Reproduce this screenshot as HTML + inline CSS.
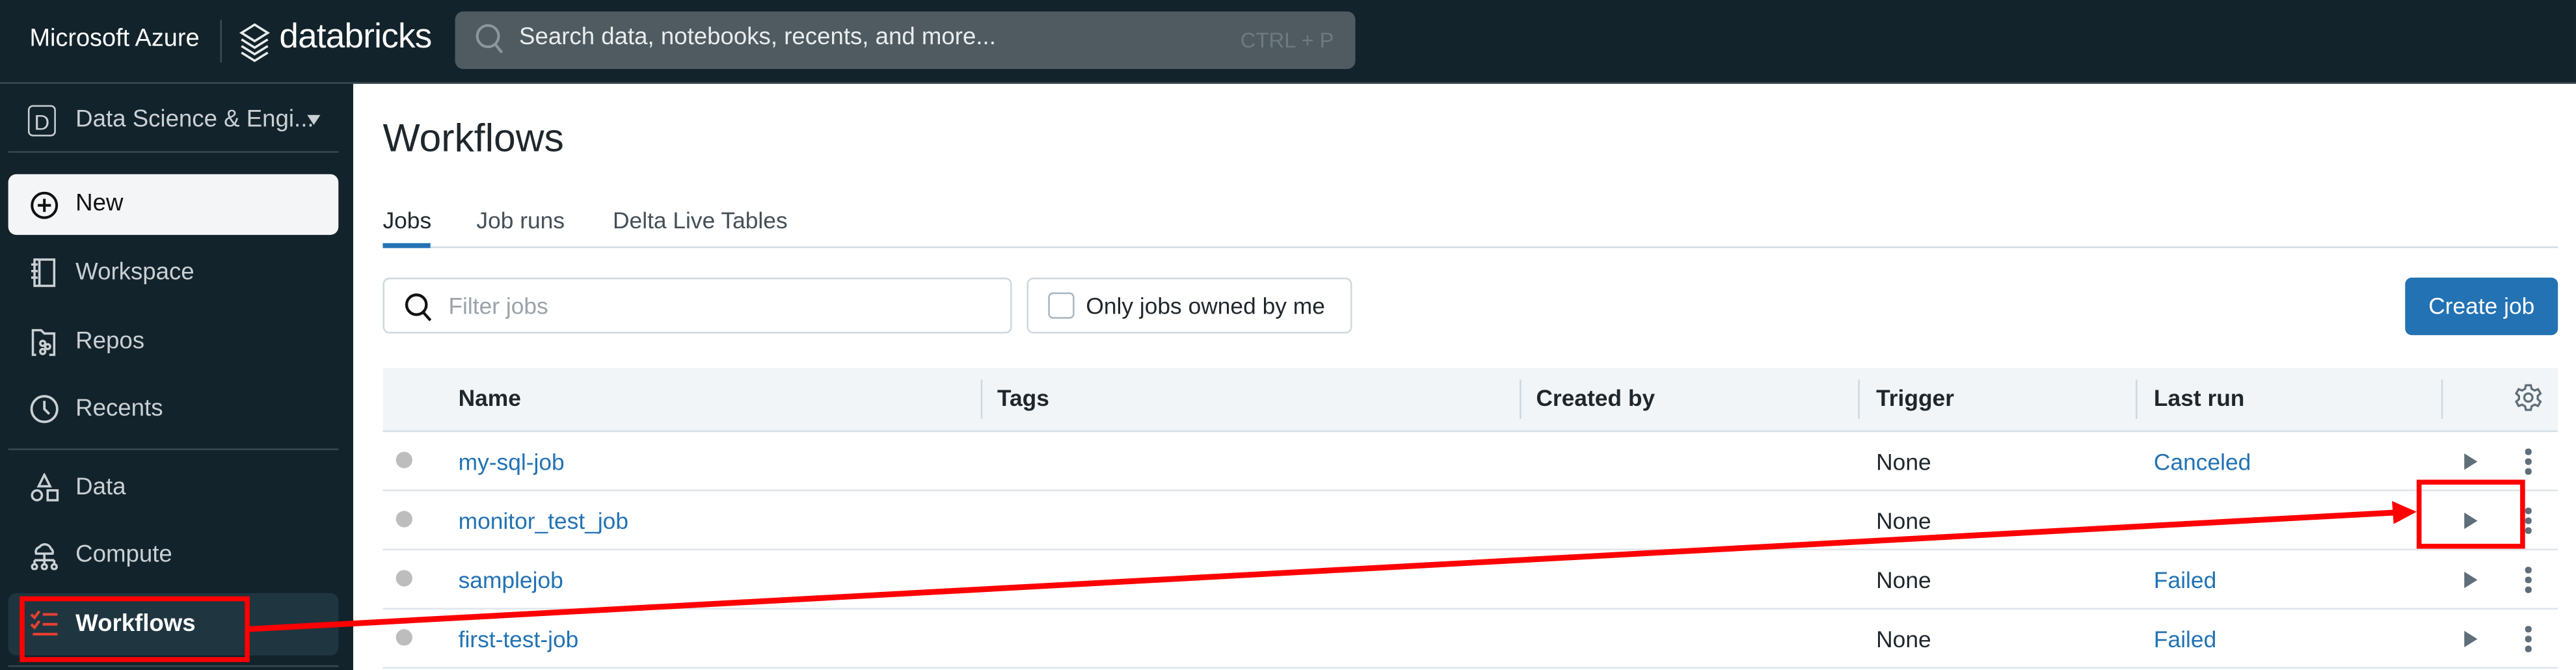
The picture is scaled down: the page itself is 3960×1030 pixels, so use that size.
<!DOCTYPE html>
<html><head><meta charset="utf-8">
<style>
html,body{margin:0;padding:0;width:3960px;height:1030px;overflow:hidden;background:#fff}
#w{position:absolute;left:0;top:0;width:1568px;height:408px;transform:scale(2.5255);transform-origin:0 0;font-family:"Liberation Sans",sans-serif;font-size:14px;color:#1f272d}
.a{position:absolute}
.top{left:0;top:0;width:1568px;height:50px;background:#13232b;border-bottom:1px solid #3a4850}
.side{left:0;top:51px;width:215px;height:357px;background:#13232b}
.si{position:absolute;left:18px;color:#c9d0d4;font-size:14.5px}
.ic{position:absolute;left:18px;width:18px;height:18px}
.hr{position:absolute;left:5px;width:201px;height:1px;background:#3a4850}
.th{font-weight:bold;font-size:14px;color:#1f272d}
.sep{position:absolute;top:231px;width:1px;height:24px;background:#cfd8e0}
.rl{position:absolute;left:233px;width:1324px;height:1px;background:#dfe5ea}
.lnk{color:#2272b4}
.dot{position:absolute;left:241px;width:10px;height:10px;border-radius:50%;background:#bdbdbd}
.play{position:absolute;left:1500px;width:0;height:0;border-left:8px solid #5f6e78;border-top:5px solid transparent;border-bottom:5px solid transparent}
.kb{position:absolute;left:1537px;width:3px}
.kb i{display:block;width:3.5px;height:3.5px;border-radius:50%;background:#5f6e78;margin-bottom:2.5px}
</style></head><body><div id="w">
<div class="a top"></div>
<div class="a" style="left:18px;top:15px;color:#fff;font-size:15px">Microsoft Azure</div>
<div class="a" style="left:134px;top:12px;width:1px;height:26px;background:#3e4b52"></div>
<svg class="a" style="left:144px;top:14px" width="22" height="24" viewBox="0 0 22 24"><g fill="none" stroke="#e8eced" stroke-width="1.4"><path d="M11 1L19 6 11 11 3 6Z"/><path d="M3 10l8 5 8-5"/><path d="M3 14l8 5 8-5"/><path d="M3 18l8 5 8-5"/></g></svg>
<div class="a" style="left:170px;top:11px;color:#fff;font-size:21px;letter-spacing:-0.3px">databricks</div>
<div class="a" style="left:277px;top:7px;width:548px;height:35px;background:#4f5b61;border-radius:5px"></div>
<svg class="a" style="left:289px;top:14px" width="18" height="20" viewBox="0 0 18 20"><circle cx="8" cy="8" r="6.5" fill="none" stroke="#8b979d" stroke-width="1.6"/><path d="M12.5 13l4 5" stroke="#8b979d" stroke-width="1.6"/></svg>
<div class="a" style="left:316px;top:15px;color:#e9edef;font-size:14.5px">Search data, notebooks, recents, and more...</div>
<div class="a" style="left:755px;top:17px;color:#6d7a81;font-size:13px">CTRL + P</div>

<div class="a side"></div>
<div class="a" style="left:17px;top:64px;width:17px;height:19px;border:1.5px solid #c9d0d4;border-radius:3px;color:#c9d0d4;font-size:13px;text-align:center;line-height:19px;box-sizing:border-box">D</div>
<div class="si" style="left:46px;top:65px">Data Science &amp; Engi...</div>
<div class="a" style="left:187px;top:70px;border-top:6px solid #c9d0d4;border-left:4px solid transparent;border-right:4px solid transparent"></div>
<div class="hr" style="top:92px"></div>
<div class="a" style="left:5px;top:106px;width:201px;height:37px;background:#f4f5f7;border-radius:5px"></div>
<svg class="a" style="left:18px;top:116px" width="18" height="18" viewBox="0 0 18 18"><circle cx="9" cy="9" r="7.5" fill="none" stroke="#111" stroke-width="1.6"/><path d="M9 5v8M5 9h8" stroke="#111" stroke-width="1.6"/></svg>
<div class="a" style="left:46px;top:116px;font-size:14.5px;color:#111">New</div>
<svg class="ic" style="top:157px" viewBox="0 0 18 18"><g fill="none" stroke="#c9d0d4" stroke-width="1.4"><rect x="3" y="1" width="12" height="16"/><path d="M6 1v16M1 4h4M1 8h4M1 12h4"/></g></svg>
<div class="si" style="left:46px;top:158px">Workspace</div>
<svg class="ic" style="top:199px" viewBox="0 0 18 18"><g fill="none" stroke="#c9d0d4" stroke-width="1.4"><path d="M4 17H2V2h5l2 2h6v13h-3"/><circle cx="8" cy="10" r="1.5"/><circle cx="11" cy="12" r="1.5"/><circle cx="8" cy="15" r="1.5"/></g></svg>
<div class="si" style="left:46px;top:200px">Repos</div>
<svg class="ic" style="top:240px" viewBox="0 0 18 18"><g fill="none" stroke="#c9d0d4" stroke-width="1.5"><circle cx="9" cy="9" r="7.8"/><path d="M9 4v5l3 3"/></g></svg>
<div class="si" style="left:46px;top:241px">Recents</div>
<div class="hr" style="top:273px"></div>
<svg class="ic" style="top:288px" viewBox="0 0 18 18"><g fill="none" stroke="#c9d0d4" stroke-width="1.4"><path d="M9 1l3.5 7h-7z"/><circle cx="4.5" cy="13.5" r="3"/><rect x="11" y="10.5" width="6" height="6"/></g></svg>
<div class="si" style="left:46px;top:289px">Data</div>
<svg class="ic" style="top:329px" viewBox="0 0 18 18"><g fill="none" stroke="#c9d0d4" stroke-width="1.4"><path d="M4 8a3 3 0 0 1 2-4 4 4 0 0 1 7 1 2.5 2.5 0 0 1 1 3z"/><path d="M9 8v4M3 12h12M3 12v2M9 12v2M15 12v2"/><circle cx="3" cy="16" r="1.5"/><circle cx="9" cy="16" r="1.5"/><circle cx="15" cy="16" r="1.5"/></g></svg>
<div class="si" style="left:46px;top:330px">Compute</div>
<div class="a" style="left:5px;top:361px;width:201px;height:38px;background:#1f3540;border-radius:5px"></div>
<svg class="ic" style="top:371px" viewBox="0 0 18 18"><g fill="none" stroke="#e8402f" stroke-width="1.6"><path d="M1 3l2 2 3-4M1 9l2 2 3-4"/><path d="M8 3h9M8 9h9M2 15h15"/></g></svg>
<div class="si" style="left:46px;top:372px;color:#fff;font-weight:bold">Workflows</div>
<div class="hr" style="top:405px"></div>

<div class="a" style="left:233px;top:71px;font-size:24px;color:#1f272d">Workflows</div>
<div class="a" style="left:233px;top:126px;font-size:14px;color:#1f272d">Jobs</div>
<div class="a" style="left:290px;top:126px;font-size:14px;color:#444f57">Job runs</div>
<div class="a" style="left:373px;top:126px;font-size:14px;color:#444f57">Delta Live Tables</div>
<div class="a" style="left:233px;top:150px;width:1324px;height:1px;background:#d0dbe4"></div>
<div class="a" style="left:233px;top:148px;width:29px;height:3px;background:#2272b4"></div>

<div class="a" style="left:233px;top:169px;width:383px;height:34px;border:1px solid #cfd8e0;border-radius:4px;box-sizing:border-box"></div>
<svg class="a" style="left:246px;top:178px" width="18" height="18" viewBox="0 0 18 18"><circle cx="7.5" cy="7.5" r="6" fill="none" stroke="#111" stroke-width="1.7"/><path d="M11.5 12l4.5 5" stroke="#111" stroke-width="1.7"/></svg>
<div class="a" style="left:273px;top:178px;color:#9aa3aa;font-size:14px">Filter jobs</div>
<div class="a" style="left:625px;top:169px;width:198px;height:34px;border:1px solid #cfd8e0;border-radius:4px;box-sizing:border-box"></div>
<div class="a" style="left:638px;top:178px;width:16px;height:16px;border:1px solid #aab6c0;border-radius:3px;box-sizing:border-box"></div>
<div class="a" style="left:661px;top:178px;font-size:14px">Only jobs owned by me</div>
<div class="a" style="left:1464px;top:169px;width:93px;height:35px;background:#2272b4;border-radius:4px;color:#fff;font-size:14px;text-align:center;line-height:35px">Create job</div>

<div class="a" style="left:233px;top:224px;width:1324px;height:38px;background:#f2f5f7;border-bottom:1px solid #d5dee6"></div>
<div class="a th" style="left:279px;top:234px">Name</div>
<div class="sep" style="left:597px"></div><div class="a th" style="left:607px;top:234px">Tags</div>
<div class="sep" style="left:925px"></div><div class="a th" style="left:935px;top:234px">Created by</div>
<div class="sep" style="left:1131px"></div><div class="a th" style="left:1142px;top:234px">Trigger</div>
<div class="sep" style="left:1300px"></div><div class="a th" style="left:1311px;top:234px">Last run</div>
<div class="sep" style="left:1486px"></div>
<svg class="a" style="left:1530px;top:233px" width="18" height="18" viewBox="0 0 18 18"><g fill="none" stroke="#5f6e78" stroke-width="1.3"><circle cx="9" cy="9" r="2.5"/><path d="M7.5 1.5h3l.5 2.2 1.8 1 2.1-.8 1.5 2.6-1.7 1.5v2l1.7 1.5-1.5 2.6-2.1-.8-1.8 1-.5 2.2h-3l-.5-2.2-1.8-1-2.1.8-1.5-2.6 1.7-1.5v-2L1.6 6.5 3.1 3.9l2.1.8 1.8-1z"/></g></svg>

<div class="dot" style="top:275px"></div><div class="a lnk" style="left:279px;top:273px">my-sql-job</div><div class="a" style="left:1142px;top:273px">None</div><div class="a lnk" style="left:1311px;top:273px">Canceled</div><div class="play" style="top:276px"></div><div class="kb" style="top:273px"><i></i><i></i><i></i></div>
<div class="rl" style="top:298px"></div>
<div class="dot" style="top:311px"></div><div class="a lnk" style="left:279px;top:309px">monitor_test_job</div><div class="a" style="left:1142px;top:309px">None</div><div class="play" style="top:312px"></div><div class="kb" style="top:309px"><i></i><i></i><i></i></div>
<div class="rl" style="top:334px"></div>
<div class="dot" style="top:347px"></div><div class="a lnk" style="left:279px;top:345px">samplejob</div><div class="a" style="left:1142px;top:345px">None</div><div class="a lnk" style="left:1311px;top:345px">Failed</div><div class="play" style="top:348px"></div><div class="kb" style="top:345px"><i></i><i></i><i></i></div>
<div class="rl" style="top:370px"></div>
<div class="dot" style="top:383px"></div><div class="a lnk" style="left:279px;top:381px">first-test-job</div><div class="a" style="left:1142px;top:381px">None</div><div class="a lnk" style="left:1311px;top:381px">Failed</div><div class="play" style="top:384px"></div><div class="kb" style="top:381px"><i></i><i></i><i></i></div>
<div class="rl" style="top:406px"></div>

<svg class="a" style="left:0;top:0" width="1568" height="408" viewBox="0 0 1568 408"><g fill="none" stroke="#f00" stroke-width="3"><rect x="13.5" y="364.5" width="137" height="37"/><rect x="1472.5" y="293.5" width="63" height="39"/></g><path d="M151 383L1458 312" stroke="#f00" stroke-width="3.5"/><path d="M1456 305L1471 311.5 1457 319Z" fill="#f00"/></svg>
</div></body></html>
